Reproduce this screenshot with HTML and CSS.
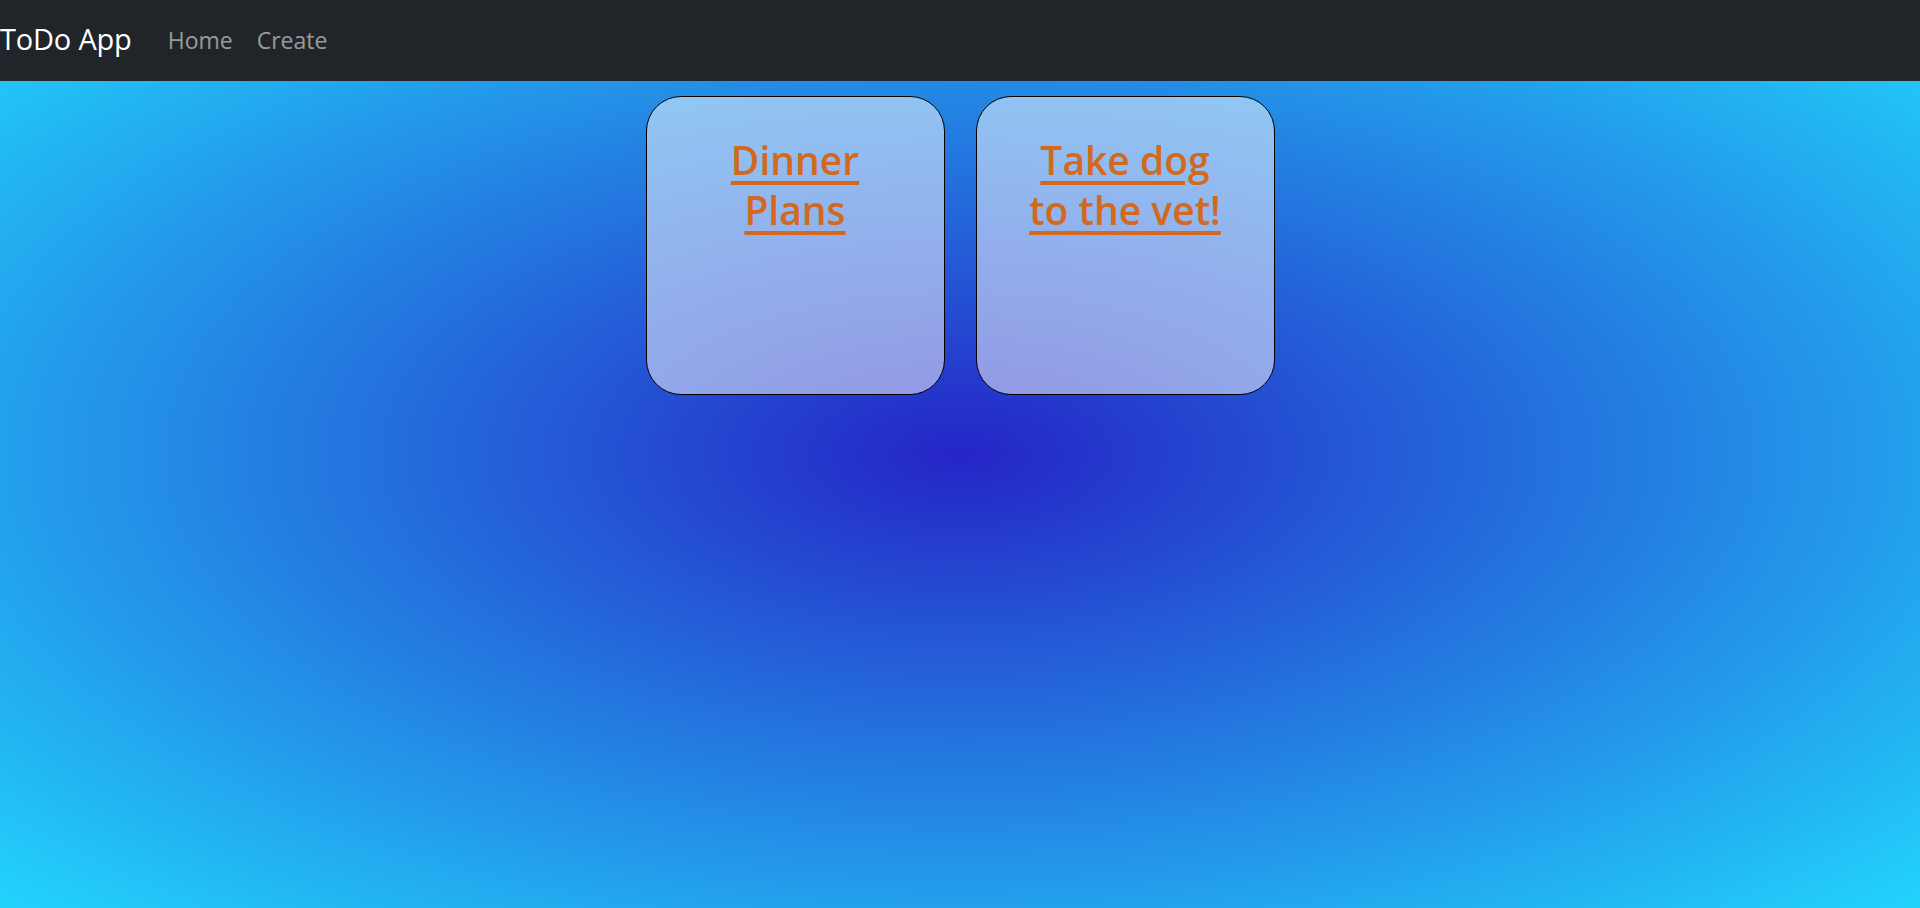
FILE: index.html
```html
<!DOCTYPE html>
<html lang="en">
<head>
<meta charset="utf-8">
<title>ToDo App</title>
<link rel="stylesheet" href="styles.css">
</head>
<body>
  <nav class="navbar">
    <a class="brand" href="#">ToDo App</a>
    <ul class="nav-links">
      <li><a class="nav-link" href="#">Home</a></li>
      <li><a class="nav-link" href="#">Create</a></li>
    </ul>
  </nav>
  <main class="todo-list">
    <div class="todo-card">
      <a class="todo-title" href="#">Dinner Plans</a>
    </div>
    <div class="todo-card">
      <a class="todo-title" href="#">Take dog to the vet!</a>
    </div>
  </main>
</body>
</html>
```

FILE: styles.css
```css
* {
  box-sizing: border-box;
}

html, body {
  margin: 0;
  padding: 0;
}

body {
  min-height: 100vh;
  font-family: "Open Sans", "Noto Sans", sans-serif;
  background: radial-gradient(ellipse farthest-corner at 50% 50%, #2525c6 0%, #22d4fc 100%);
  background-attachment: fixed;
}

.navbar {
  height: 81px;
  background: #212529;
  display: flex;
  align-items: center;
}

.brand {
  color: #ffffff;
  text-decoration: none;
  font-size: 29px;
  line-height: 1.5;
  margin-right: 24px;
  letter-spacing: -0.2px;
  position: relative;
  top: -2px;
}

.nav-links {
  list-style: none;
  margin: 0;
  padding: 0;
  display: flex;
}

.nav-link {
  display: block;
  padding: 12px 12px;
  color: rgba(255, 255, 255, 0.55);
  text-decoration: none;
  font-size: 23px;
  line-height: 1.5;
}

.todo-list {
  display: flex;
  justify-content: center;
  gap: 31px;
  padding-top: 15px;
}

.todo-card {
  width: 299px;
  height: 299px;
  border: 1px solid #000000;
  border-radius: 35px;
  background: rgba(255, 255, 255, 0.5);
  padding: 38px 40px;
  text-align: center;
}

.todo-title {
  color: #d2691e;
  font-size: 39px;
  font-weight: 600;
  line-height: 50px;
  text-decoration: underline;
  text-decoration-thickness: 4px;
  text-underline-offset: 6px;
}
```
